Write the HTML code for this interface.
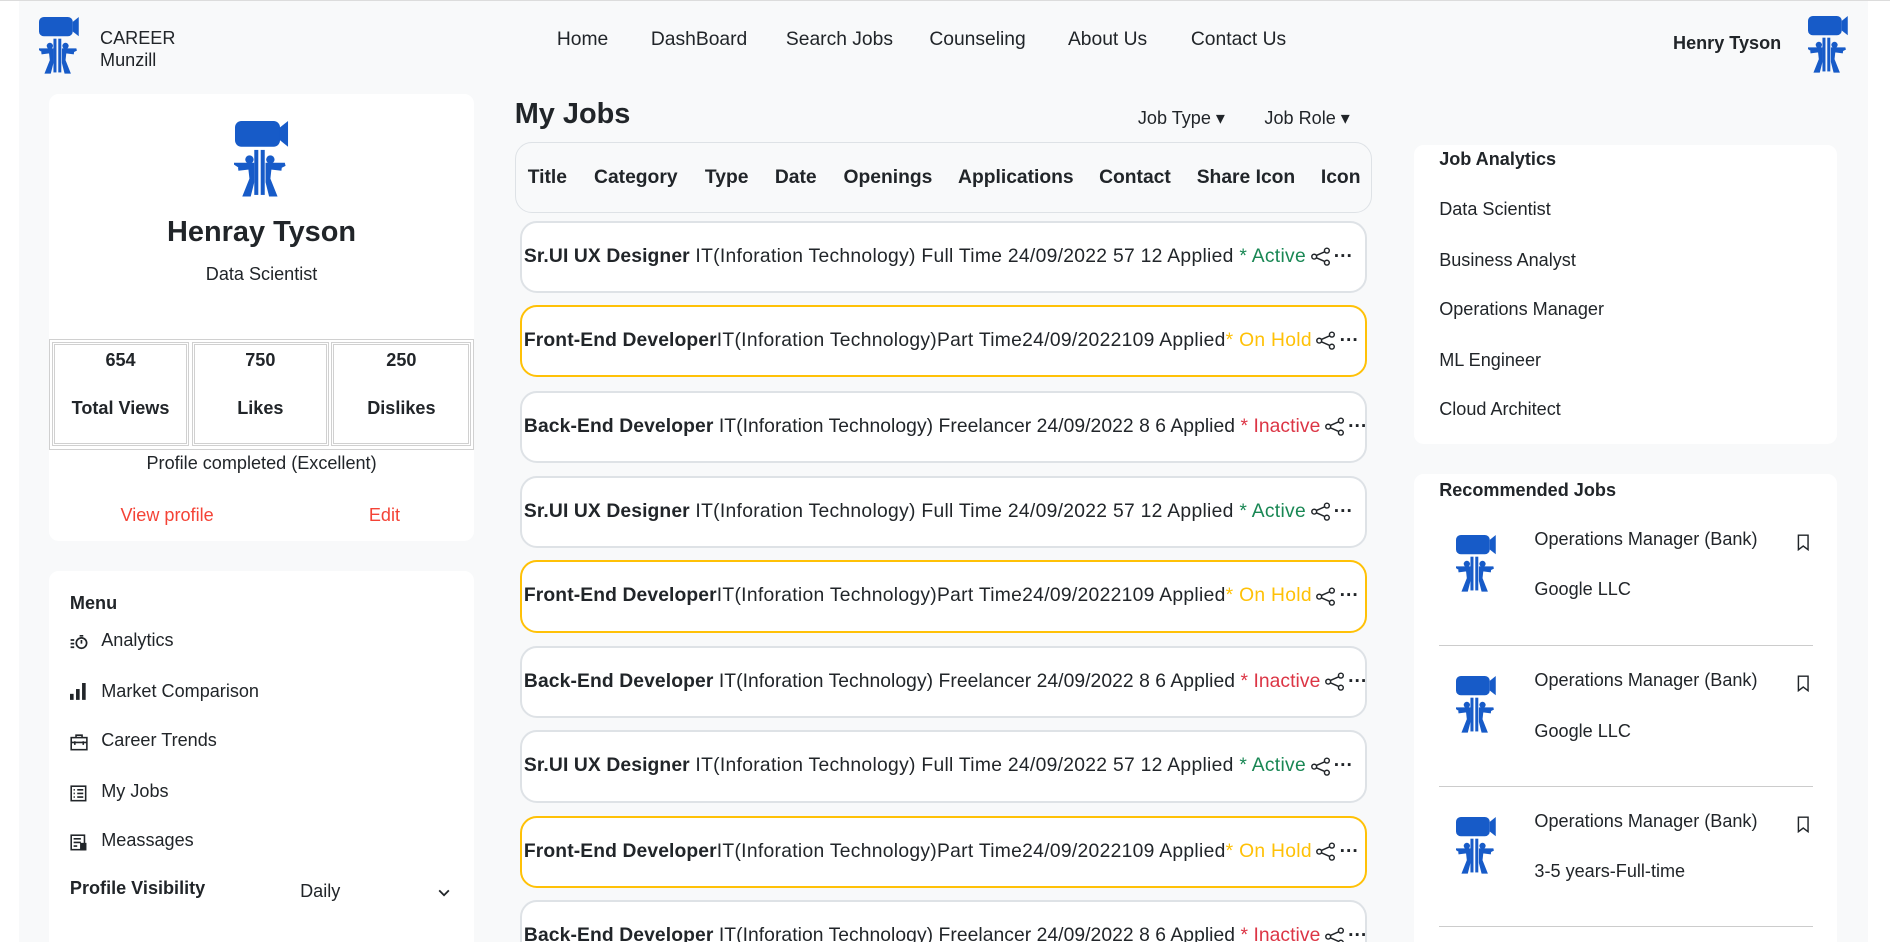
<!DOCTYPE html>
<html><head><meta charset="utf-8"><style>
*{box-sizing:border-box;margin:0;padding:0}
html,body{width:1890px;height:942px;overflow:hidden;background:#fff}
#w{position:relative;width:1568px;height:782px;zoom:1.20536;font-family:"Liberation Sans",sans-serif;color:#212529;font-size:15px}
.a{position:absolute;white-space:nowrap}
.card{position:absolute;background:#fff;border-radius:8px}
.row{position:absolute;left:431px;width:703px;height:60px;border:2px solid #dee2e6;border-radius:14px;background:#fff;font-size:16px;line-height:56px;padding-left:2px;white-space:nowrap;overflow:hidden;letter-spacing:0.25px}
.row.y{border-color:#ffc107}
.row.n{letter-spacing:0.05px}
.row b{font-weight:bold;letter-spacing:0.1px}
.g{color:#198754}.o{color:#ffc107}.r{color:#dc3545}
.row svg{vertical-align:middle;margin-left:3px}
.dots{font-weight:bold;letter-spacing:0;margin-left:2px}
.nav{position:absolute;top:24px;font-size:16px}
.st{position:absolute;top:284px;width:114px;height:86px;border:3px double #d0d0d0;text-align:center;font-weight:bold;font-size:15px}
</style></head><body><div id="w">
<div class="a" style="left:0;top:0;width:1568px;height:1px;background:#dcdcdc"></div>
<div class="a" style="left:16px;top:1px;width:1534px;height:781px;background:#f8f9fa"></div>
<svg width="0" height="0" style="position:absolute"><defs><g id="logo">
<rect x="0" y="0" width="28" height="16" rx="4" fill="#175bc8"/><path d="M28 4 L33 0 V16 L28 12Z" fill="#175bc8"/>
<rect x="12" y="18" width="2.5" height="28" fill="#175bc8"/><rect x="16" y="18" width="2.5" height="28" fill="#175bc8"/>
<circle cx="9" cy="24" r="2.6" fill="#175bc8"/><circle cx="22" cy="24" r="2.6" fill="#175bc8"/>
<path d="M1 27 L4 29 L9 27 L10 36 L6 46 L9 46 L11 38 V27 Z M31 27 L27 29 L22 27 L21 36 L25 46 L22 46 L20 38 V27Z M10 29 L2 30 M21 29 L29 30" fill="#175bc8" stroke="#175bc8" stroke-width="2"/>
</g></defs></svg>
<svg class="a" style="left:32px;top:14px" width="34" height="48" viewBox="0 0 34 48"><use href="#logo"/></svg>
<div class="a" style="left:83px;top:22px;font-size:15px;line-height:19px">CAREER<br>Munzill</div>
<div class="nav" style="left:462px">Home</div><div class="nav" style="left:540px">DashBoard</div><div class="nav" style="left:652px">Search Jobs</div><div class="nav" style="left:771px">Counseling</div><div class="nav" style="left:886px">About Us</div><div class="nav" style="left:988px">Contact Us</div>
<div class="a" style="left:1388px;top:27px;font-weight:bold;font-size:15px">Henry Tyson</div>
<svg class="a" style="left:1500px;top:13px" width="34" height="48" viewBox="0 0 34 48"><use href="#logo"/></svg>

<div class="card" style="left:41px;top:78px;width:352px;height:371px"></div>
<svg class="a" style="left:194px;top:100px" width="47" height="64" viewBox="0 0 34 48"><use href="#logo"/></svg>
<div class="a" style="left:41px;width:352px;text-align:center;top:179px;font-size:24px;font-weight:bold">Henray Tyson</div>
<div class="a" style="left:41px;width:352px;text-align:center;top:219px;font-size:15px">Data Scientist</div>
<div class="a" style="left:41px;top:281px;width:352px;height:92px;border:1px solid #d0d0d0"></div>
<div class="st" style="left:43px"><div style="margin-top:4px">654</div><div style="margin-top:22px">Total Views</div></div>
<div class="st" style="left:159px"><div style="margin-top:4px">750</div><div style="margin-top:22px">Likes</div></div>
<div class="st" style="left:275px;width:116px"><div style="margin-top:4px">250</div><div style="margin-top:22px">Dislikes</div></div>
<div class="a" style="left:41px;width:352px;text-align:center;top:376px">Profile completed (Excellent)</div>
<div class="a" style="left:100px;top:419px;color:#f44336">View profile</div>
<div class="a" style="left:306px;top:419px;color:#f44336">Edit</div>

<div class="card" style="left:41px;top:474px;width:352px;height:320px"></div>
<div class="a" style="left:58px;top:492px;font-weight:bold">Menu</div>
<svg class="a" style="left:58px;top:526px" width="15" height="13" fill="none" stroke="#212529" stroke-width="1.4"><circle cx="9.5" cy="7.5" r="4.3"/><path d="M9.5 5v3M8 1.5h3M0.5 5h3M0.5 8h3M0.5 11h3"/></svg><div class="a" style="left:84px;top:523px">Analytics</div>
<svg class="a" style="left:58px;top:567px" width="15" height="15"><rect x="0" y="9" width="3" height="5" fill="#212529"/><rect x="5" y="5" width="3" height="9" fill="#212529"/><rect x="10" y="0" width="3" height="14" fill="#212529"/></svg><div class="a" style="left:84px;top:565px">Market Comparison</div>
<svg class="a" style="left:58px;top:609px" width="15" height="14" fill="none" stroke="#212529" stroke-width="1.3"><rect x="1" y="3" width="13" height="10"/><path d="M5 3V1h5v2M1 7h13M4 6v3M11 6v3"/></svg><div class="a" style="left:84px;top:606px">Career Trends</div>
<svg class="a" style="left:58px;top:651px" width="15" height="14" fill="none" stroke="#212529" stroke-width="1.3"><rect x="1" y="1" width="12" height="12"/><path d="M3 4h1M3 7h1M3 10h1M6 4h5M6 7h5M6 10h5"/></svg><div class="a" style="left:84px;top:648px">My Jobs</div>
<svg class="a" style="left:58px;top:692px" width="15" height="14" fill="none" stroke="#212529" stroke-width="1.3"><rect x="1" y="1" width="11" height="12"/><path d="M3 4h6M3 7h6M3 10h3"/><rect x="9" y="8" width="4" height="5" fill="#212529"/></svg><div class="a" style="left:84px;top:689px">Meassages</div>
<div class="a" style="left:58px;top:728px;font-weight:bold">Profile Visibility</div>
<div class="a" style="left:249px;top:731px">Daily</div>
<svg class="a" style="left:363px;top:737px" width="10" height="8"><path d="M1 2l4 4 4-4" stroke="#212529" stroke-width="1.5" fill="none"/></svg>

<div class="a" style="left:427px;top:81px;font-size:24px;font-weight:bold">My Jobs</div>
<div class="a" style="left:944px;top:90px">Job Type ▾</div>
<div class="a" style="left:1049px;top:90px">Job Role ▾</div>
<div class="a" style="left:427px;top:118px;width:711px;height:59px;border:1px solid #dee2e6;border-radius:14px;background:#f8f9fa;font-weight:bold;font-size:16px;line-height:58px">
<span class="a" style="left:10px">Title</span><span class="a" style="left:65px">Category</span><span class="a" style="left:157px">Type</span><span class="a" style="left:215px">Date</span><span class="a" style="left:272px">Openings</span><span class="a" style="left:367px">Applications</span><span class="a" style="left:484px">Contact</span><span class="a" style="left:565px">Share Icon</span><span class="a" style="left:668px">Icon</span></div>

<div id="rows"></div>
<script>
var t=[183,253,324,395,465,536,606,677,747],h='';
var share='<svg width="18" height="16" viewBox="0 0 18 16" fill="none" stroke="#212529" stroke-width="1.2"><circle cx="3.5" cy="8" r="2"/><circle cx="14" cy="3" r="2"/><circle cx="14" cy="13" r="2"/><path d="M5.3 7L12.2 4M5.3 9L12.2 12"/></svg><span class="dots">···</span>';
for(var i=0;i<9;i++){var k=i%3,c;
if(k==0)c='<b>Sr.UI UX Designer</b> IT(Inforation Technology) Full Time 24/09/2022 57 12 Applied <span class="g">* Active</span>';
else if(k==1)c='<b>Front-End Developer</b>IT(Inforation Technology)Part Time24/09/2022109 Applied<span class="o">* On Hold</span>';
else c='<b>Back-End Developer</b> IT(Inforation Technology) Freelancer 24/09/2022 8 6 Applied <span class="r">* Inactive</span>';
h+='<div class="row'+(k==1?' y':'')+(k==2?' n':'')+'" style="top:'+t[i]+'px">'+c+share+'</div>';}
document.getElementById('rows').innerHTML=h;
</script>

<div class="card" style="left:1173px;top:120px;width:351px;height:248px"></div>
<div class="a" style="left:1194px;top:124px;font-weight:bold">Job Analytics</div>
<div class="a" style="left:1194px;top:165px">Data Scientist</div>
<div class="a" style="left:1194px;top:207px">Business Analyst</div>
<div class="a" style="left:1194px;top:248px">Operations Manager</div>
<div class="a" style="left:1194px;top:290px">ML Engineer</div>
<div class="a" style="left:1194px;top:331px">Cloud Architect</div>

<div class="card" style="left:1173px;top:393px;width:351px;height:400px"></div>
<div class="a" style="left:1194px;top:398px;font-weight:bold">Recommended Jobs</div>
<svg class="a" style="left:1208px;top:444px" width="34" height="48" viewBox="0 0 34 48"><use href="#logo"/></svg>
<div class="a" style="left:1273px;top:439px">Operations Manager (Bank)</div><div class="a" style="left:1273px;top:480px">Google LLC</div>
<svg class="a" style="left:1490px;top:443px" width="12" height="14" fill="none" stroke="#212529" stroke-width="1.2"><path d="M2 1h8v12l-4-3-4 3z"/></svg>
<div class="a" style="left:1194px;top:535px;width:310px;height:1px;background:#ccc"></div>
<svg class="a" style="left:1208px;top:561px" width="34" height="48" viewBox="0 0 34 48"><use href="#logo"/></svg>
<div class="a" style="left:1273px;top:556px">Operations Manager (Bank)</div><div class="a" style="left:1273px;top:598px">Google LLC</div>
<svg class="a" style="left:1490px;top:560px" width="12" height="14" fill="none" stroke="#212529" stroke-width="1.2"><path d="M2 1h8v12l-4-3-4 3z"/></svg>
<div class="a" style="left:1194px;top:652px;width:310px;height:1px;background:#ccc"></div>
<svg class="a" style="left:1208px;top:678px" width="34" height="48" viewBox="0 0 34 48"><use href="#logo"/></svg>
<div class="a" style="left:1273px;top:673px">Operations Manager (Bank)</div><div class="a" style="left:1273px;top:714px">3-5 years-Full-time</div>
<svg class="a" style="left:1490px;top:677px" width="12" height="14" fill="none" stroke="#212529" stroke-width="1.2"><path d="M2 1h8v12l-4-3-4 3z"/></svg>
<div class="a" style="left:1194px;top:768px;width:310px;height:1px;background:#ccc"></div>
</div></body></html>
